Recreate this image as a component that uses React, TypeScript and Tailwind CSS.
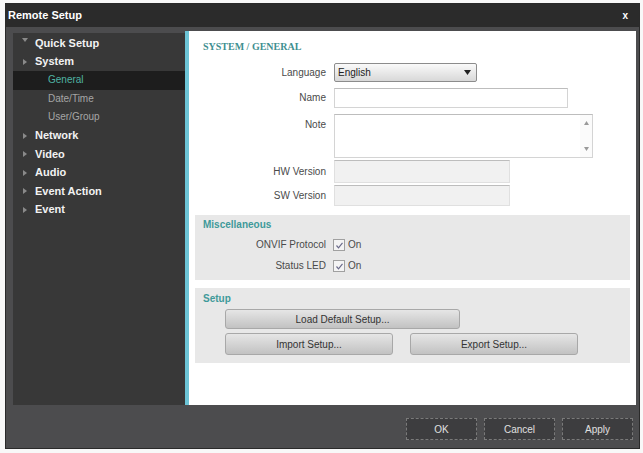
import React from "react";

const Tri = ({ down }: { down?: boolean }) => (
  <svg width="6" height="6" viewBox="0 0 6 6" className="shrink-0">
    {down ? <path d="M0 1 L6 1 L3 5 Z" fill="#8a8a8a" /> : <path d="M1 0 L5 3 L1 6 Z" fill="#8a8a8a" />}
  </svg>
);

const TopItem = ({ label, down }: { label: string; down?: boolean }) => (
  <div className="h-[18.5px] flex items-center pl-[9px] gap-[4px]">
    <div className={down ? "-mt-[6px]" : ""}>
      <Tri down={down} />
    </div>
    <span className="text-[11px] font-bold text-[#f2f2f2] leading-none ml-[3px]">{label}</span>
  </div>
);

const SubItem = ({ label, selected }: { label: string; selected?: boolean }) => (
  <div className={`h-[18.5px] flex items-center pl-[35px] ${selected ? "bg-[#1d1d1d]" : ""}`}>
    <span className={`text-[10px] leading-none ${selected ? "text-[#4fb3a3]" : "text-[#a6a6a6]"}`}>{label}</span>
  </div>
);

const Label = ({ children, w = "w-[137px]" }: { children: React.ReactNode; w?: string }) => (
  <div className={`${w} shrink-0 text-right text-[10px] text-[#4a4a4a] leading-none`}>{children}</div>
);

const Check = () => (
  <div className="w-[12px] h-[12px] border border-[#a0a0a0] bg-[#f4f4f4] flex items-center justify-center">
    <svg width="9" height="9" viewBox="0 0 9 9">
      <path d="M1.5 4.5 L3.5 6.8 L7.5 1.8" stroke="#6a6a8a" strokeWidth="1.2" fill="none" />
    </svg>
  </div>
);

const GrayBtn = ({ children, w }: { children: React.ReactNode; w: string }) => (
  <div
    className={`${w} h-full rounded-[3px] border border-[#a8a8a8] bg-gradient-to-b from-[#e6e6e6] to-[#c2c2c2] flex items-center justify-center text-[10px] text-[#333]`}
  >
    {children}
  </div>
);

const DarkBtn = ({ children }: { children: React.ReactNode }) => (
  <div className="w-[71px] h-[22px] border border-dashed border-[#7a7a7a] bg-[#3d3d3f] flex items-center justify-center text-[10px] text-[#e0e0e0]">
    {children}
  </div>
);

export default function App() {
  return (
    <div
      className="w-[643px] h-[453px] bg-[#f8f8f8] pl-[5px] pt-[3px]"
      style={{ fontFamily: '"Liberation Sans", Arial, sans-serif' }}
    >
      <div className="w-[635px] h-[446px] bg-[#4c4c4e] flex flex-col border border-[#2a2a2a]">
        {/* title bar */}
        <div className="h-[23px] bg-[#2b2b2b] flex items-center justify-between pl-[2px] pr-[11px] shrink-0">
          <span className="text-[11px] font-bold text-white leading-none">Remote Setup</span>
          <span className="text-[10px] font-bold text-white leading-none">x</span>
        </div>
        {/* main */}
        <div className="flex mt-[4px] h-[374px] shrink-0">
          <div className="ml-[7px] mt-[2px] w-[172px] h-[372px] bg-[#383838] pt-[1px]">
            <TopItem label="Quick Setup" down />
            <TopItem label="System" />
            <SubItem label="General" selected />
            <SubItem label="Date/Time" />
            <SubItem label="User/Group" />
            <TopItem label="Network" />
            <TopItem label="Video" />
            <TopItem label="Audio" />
            <TopItem label="Event Action" />
            <TopItem label="Event" />
          </div>
          <div className="w-[451px] h-full border-l-[4px] border-[#6cc4d6] bg-white flex flex-col pt-[10px]">
            <div
              className="pl-[14px] h-[12px] text-[10px] font-bold text-[#3f8f90] leading-none flex items-center"
              style={{ fontFamily: '"Liberation Serif", serif' }}
            >
              SYSTEM / GENERAL
            </div>
            {/* Language */}
            <div className="flex items-center mt-[10px] h-[19px]">
              <Label>Language</Label>
              <div className="ml-[8px] w-[143px] h-full rounded-[2px] border border-[#8c8c8c] bg-gradient-to-b from-[#fafafa] to-[#d8d8d8] flex items-center justify-between pl-[3px] pr-[5px]">
                <span className="text-[10px] text-[#222] leading-none">English</span>
                <svg width="7" height="5" viewBox="0 0 7 5">
                  <path d="M0 0 L7 0 L3.5 5 Z" fill="#222" />
                </svg>
              </div>
            </div>
            {/* Name */}
            <div className="flex items-center mt-[6px] h-[20px]">
              <Label>Name</Label>
              <div className="ml-[8px] w-[234px] h-full border border-[#d4d4d4] border-t-[#bdbdbd] bg-white" />
            </div>
            {/* Note */}
            <div className="flex items-start mt-[6px] h-[44px]">
              <div className="pt-[6px]">
                <Label>Note</Label>
              </div>
              <div className="ml-[8px] w-[259px] h-full border border-[#d4d4d4] border-t-[#bdbdbd] bg-white flex justify-end">
                <div className="w-[12px] h-full flex flex-col items-center justify-between py-[6px] bg-[#fbfbfb]">
                  <svg width="5" height="4" viewBox="0 0 5 4">
                    <path d="M0 4 L5 4 L2.5 0 Z" fill="#9a9a9a" />
                  </svg>
                  <svg width="5" height="4" viewBox="0 0 5 4">
                    <path d="M0 0 L5 0 L2.5 4 Z" fill="#9a9a9a" />
                  </svg>
                </div>
              </div>
            </div>
            {/* HW */}
            <div className="flex items-center mt-[2px] h-[23px]">
              <Label>HW Version</Label>
              <div className="ml-[8px] w-[176px] h-full border border-[#e0e0e0] border-t-[#bdbdbd] bg-[#f1f1f1]" />
            </div>
            {/* SW */}
            <div className="flex items-center mt-[2px] h-[21px]">
              <Label>SW Version</Label>
              <div className="ml-[8px] w-[176px] h-full border border-[#e0e0e0] border-t-[#bdbdbd] bg-[#f1f1f1]" />
            </div>
            {/* Miscellaneous */}
            <div className="mt-[9px] mx-[6px] h-[65px] bg-[#e8e8e8] pt-[4px] flex flex-col">
              <div className="pl-[8px] h-[12px] text-[10px] font-bold text-[#3f9a9a] leading-none flex items-center">
                Miscellaneous
              </div>
              <div className="flex items-center mt-[6px] h-[16px]">
                <Label w="w-[131px]">ONVIF Protocol</Label>
                <div className="ml-[7px]">
                  <Check />
                </div>
                <span className="ml-[3px] text-[10px] text-[#4a4a4a] leading-none">On</span>
              </div>
              <div className="flex items-center mt-[5px] h-[16px]">
                <Label w="w-[131px]">Status LED</Label>
                <div className="ml-[7px]">
                  <Check />
                </div>
                <span className="ml-[3px] text-[10px] text-[#4a4a4a] leading-none">On</span>
              </div>
            </div>
            {/* Setup */}
            <div className="mt-[8px] mx-[6px] h-[75px] bg-[#e8e8e8] pt-[5px] flex flex-col">
              <div className="pl-[8px] h-[12px] text-[10px] font-bold text-[#3f9a9a] leading-none flex items-center">
                Setup
              </div>
              <div className="mt-[4px] h-[20px] pl-[30px] flex">
                <GrayBtn w="w-[235px]">Load Default Setup...</GrayBtn>
              </div>
              <div className="mt-[4px] h-[22px] pl-[30px] flex gap-[17px]">
                <GrayBtn w="w-[168px]">Import Setup...</GrayBtn>
                <GrayBtn w="w-[168px]">Export Setup...</GrayBtn>
              </div>
            </div>
          </div>
        </div>
        {/* footer */}
        <div className="flex-1 flex justify-end items-start pt-[13px] pr-[6px] gap-[7px]">
          <DarkBtn>OK</DarkBtn>
          <DarkBtn>Cancel</DarkBtn>
          <DarkBtn>Apply</DarkBtn>
        </div>
      </div>
    </div>
  );
}
